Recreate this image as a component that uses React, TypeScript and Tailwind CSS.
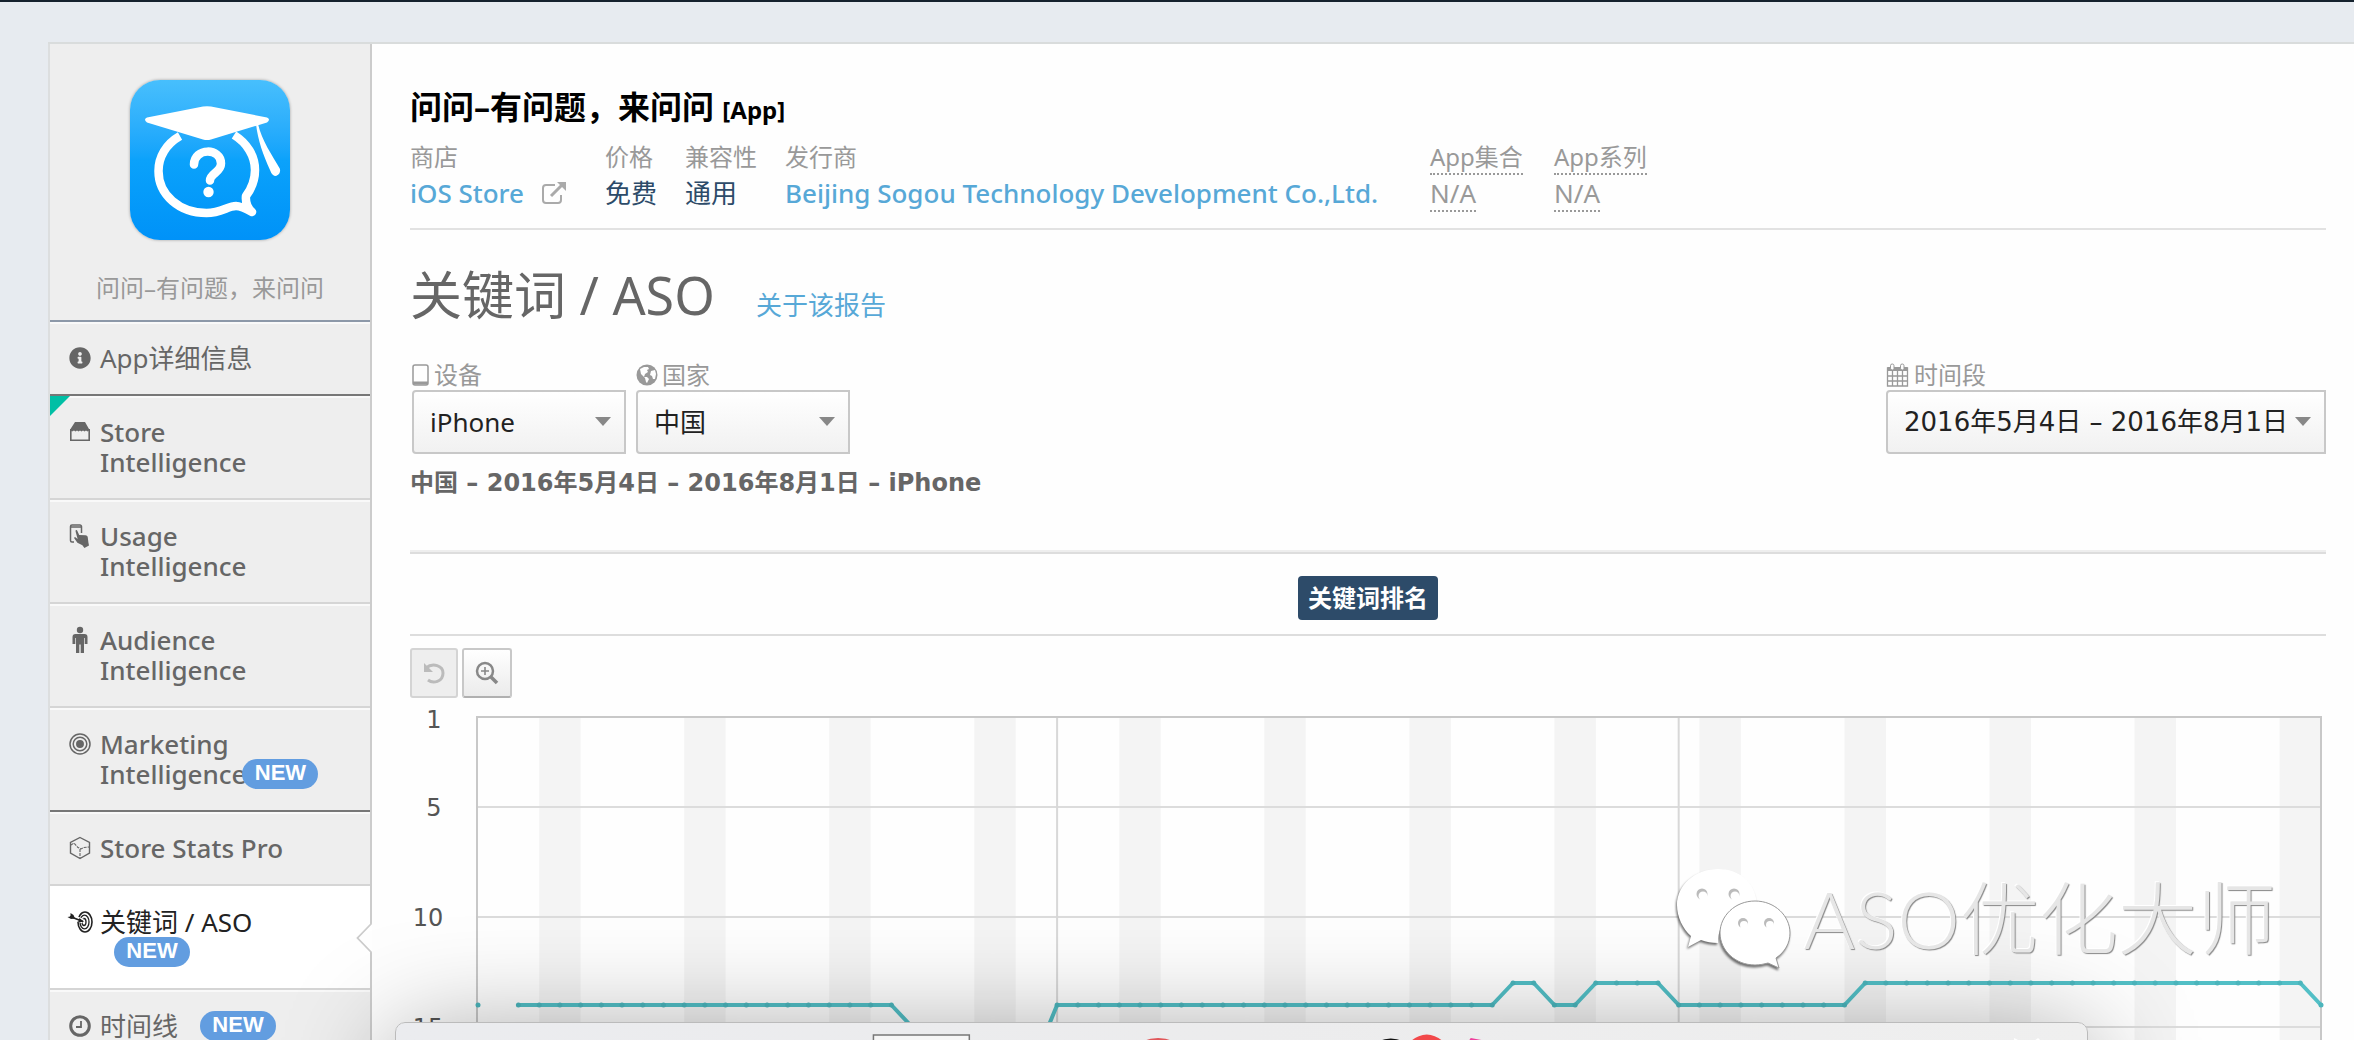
import type { ReactNode } from "react";
import { FaInfoCircle } from "react-icons/fa";

const DAYS = 89;
const PLOT_WIDTH = 1844;
const STEP = PLOT_WIDTH / DAYS;

const rankY = (rank: number) => 219 + (rank - 10) * 22;
const dayX = (day: number) => Math.round(day * STEP * 10) / 10;

// rank changes only; days in between are straight
const ranks: [number, number][] = [
  [2, 14],
  [20, 14],
  [21, 15],
  [24, 17],
  [27, 16.3],
  [28, 14],
  [49, 14],
  [50, 13],
  [51, 13],
  [52, 14],
  [53, 14],
  [54, 13],
  [57, 13],
  [58, 14],
  [66, 14],
  [67, 13],
  [88, 13],
  [89, 14],
];

const weekends = Array.from({ length: 13 }, (_, i) => 3 + i * 7);
const months = [28, 58];

function rankOn(day: number) {
  const i = ranks.findIndex(([d]) => d >= day);
  const [d1, r1] = ranks[i];
  if (d1 === day) return r1;
  const [d0, r0] = ranks[i - 1];
  return r0 + ((r1 - r0) * (day - d0)) / (d1 - d0);
}

function StoreIcon() {
  return (
    <svg viewBox="0 0 22 22" className="size-[22px]" fill="currentColor">
      <path d="M6 1h10l4 7v1.500l-1.500 1-1.500-1-1.500 1-1.500-1-1.500 1-1.500-1-1.500 1-1.500-1-1.500 1-1.500-1L3 10.500l-1.500-1V8z" />
      <path d="M1.800 8v11.200h18.400V8" fill="none" stroke="currentColor" strokeWidth="1.600" />
    </svg>
  );
}

function TouchIcon() {
  return (
    <svg viewBox="0 0 22 26" className="h-[26px] w-[22px]" fill="currentColor">
      <path
        d="M5 19H3a1.500 1.500 0 0 1-1.500-1.500v-14A1.500 1.500 0 0 1 3 2h8a1.500 1.500 0 0 1 1.500 1.500V10M1.500 4H12"
        fill="none"
        stroke="currentColor"
        strokeWidth="1.500"
      />
      <path d="M6.600 7.500c.6-.8 1.500-.4 1.800.4l1.800 4.200 6.200.2c1.600.1 2.200 1 2.400 2.200l.6 5 .6 3-4.600 2.500-2-2.800-5-2.400-3.200-4.600c-.3-.9.8-1.400 1.600-.7l1.800 1.500-2-7.500z" />
    </svg>
  );
}

function PersonIcon() {
  return (
    <svg viewBox="0 0 22 28" className="h-[28px] w-[22px]" fill="currentColor">
      <circle cx="11" cy="4" r="3.200" />
      <path d="M6.500 8h9q3 0 3 3v7h-2.800v-6h-.7v15h-3.300v-8.500h-1.400V27H7V12h-.7v6H3.500v-7q0-3 3-3z" />
    </svg>
  );
}

function TargetIcon() {
  return (
    <svg viewBox="0 0 22 22" className="size-[22px]" fill="none" stroke="currentColor" strokeWidth="1.500">
      <circle cx="11" cy="11" r="10" />
      <circle cx="11" cy="11" r="6.800" />
      <circle cx="11" cy="11" r="3.200" fill="currentColor" />
    </svg>
  );
}

function CubeIcon() {
  return (
    <svg viewBox="0 0 22 24" className="h-[24px] w-[22px]" fill="none" stroke="currentColor">
      <path d="M11 1.500 20.500 6.500v10.500L11 22.500 1.500 17V6.500z" strokeWidth="1.400" />
      <path d="m2 9 3-2 4 4.500 3 1.500 3-1.500 5-.5M11 13v9" strokeWidth="1.100" strokeDasharray="3 1" />
    </svg>
  );
}

function DartIcon() {
  return (
    <svg viewBox="0 0 26 24" className="h-[24px] w-[26px] shrink-0" fill="none" stroke="currentColor">
      <ellipse cx="18" cy="12" rx="7" ry="10" strokeWidth="1.600" />
      <ellipse cx="17.500" cy="12" rx="4.500" ry="6.800" strokeWidth="1.300" />
      <ellipse cx="17" cy="12" rx="2" ry="3.500" strokeWidth="1.300" />
      <path d="m4 7 12 4" stroke="#fff" strokeWidth="5" />
      <path d="m3 6.500 13 5" strokeWidth="1.700" />
      <path d="m3.500 3 3 2L8 8.500 4 9 .500 7l3-.5z" fill="currentColor" stroke="none" />
      <path d="m12.500 8 4.500 3.800-6 .4z" fill="currentColor" stroke="none" />
    </svg>
  );
}

function ClockIcon() {
  return (
    <svg viewBox="0 0 22 22" className="size-[22px]" fill="none" stroke="currentColor">
      <circle cx="11" cy="11" r="9.300" strokeWidth="3" />
      <path d="M12 6v6H7" strokeWidth="1.800" />
    </svg>
  );
}

function AppLogo() {
  return (
    <svg
      viewBox="0 0 160 160"
      className="size-40 rounded-[30px] bg-linear-to-b from-[#47bffd] via-[#0ba2fb] to-[#0092f8] shadow-[0_0_3px_rgba(0,0,0,0.35)]"
      role="img"
      aria-label="问问"
    >
      <path
        d="M50 56C36 64 28.500 77 28.500 91c0 24 21 42 48 42C91 133 98 126 106 126q5 0 16 6-7-6-6-16C122 108 125 100 125 90 125 76 117 63 104 55"
        fill="none"
        stroke="#fff"
        strokeWidth="8.500"
        strokeLinejoin="round"
      />
      <path d="M17 37.500 73 26.500q4-.6 8 0l56 11q4 2 0 5L81 59.500q-4 1-8 0L17 42.500q-4-3 0-5z" fill="#fff" />
      <path d="M126 44c2 17 7 30 14 46q2 6 6 6 5-2 4-7c-8-14-18-28-22-45z" fill="#fff" />
      <path
        d="M64 84.500c0-17 27-17 27-1 0 9-11 10-11 17"
        fill="none"
        stroke="#fff"
        strokeWidth="8.500"
        strokeLinecap="round"
      />
      <circle cx="78.500" cy="112" r="5.200" fill="#fff" />
    </svg>
  );
}

function NewBadge({ className }: { className: string }) {
  return (
    <span
      className={`inline-block h-[30px] w-[76px] rounded-full bg-[#629de0] text-center align-top font-['Liberation_Sans',sans-serif] text-[22px] leading-[28px] font-bold text-white ${className}`}
    >
      NEW
    </span>
  );
}

type NavItem = {
  label: string;
  icon: ReactNode;
  badge?: string;
  tall?: boolean;
  latin?: boolean;
  dark?: boolean;
  corner?: boolean;
  active?: boolean;
};

const nav: NavItem[] = [
  { label: "App详细信息", icon: <FaInfoCircle className="size-[22px]" />, dark: true },
  { label: "Store Intelligence", icon: <StoreIcon />, tall: true, latin: true, corner: true },
  { label: "Usage Intelligence", icon: <TouchIcon />, tall: true, latin: true },
  { label: "Audience Intelligence", icon: <PersonIcon />, tall: true, latin: true },
  { label: "Marketing Intelligence", icon: <TargetIcon />, tall: true, latin: true, dark: true, badge: "-ml-1" },
  { label: "Store Stats Pro", icon: <CubeIcon />, latin: true },
  { label: "关键词 / ASO", icon: <DartIcon />, active: true, badge: "ml-[14px]" },
  { label: "时间线", icon: <ClockIcon />, badge: "ml-[22px]" },
];

function Sidebar() {
  return (
    <aside className="flex w-[324px] shrink-0 flex-col border-x-2 border-l-[#dcdedf] border-r-[#ccc] bg-[#eee]">
      <div className="flex flex-col items-center border-b-2 border-[#8c98a8] pt-9 pb-[17px]">
        <AppLogo />
        <p className="mt-[33px] text-[24px] leading-[30px] text-[#999]">问问–有问题，来问问</p>
      </div>
      <nav>
        <ul>
          {nav.map((item) => (
            <li
              key={item.label}
              className={`relative border-b-2 ${item.dark ? "border-b-[#777]" : "border-b-[#d5d5d5]"} ${
                item.active ? "bg-white text-[#222]" : "text-[#666]"
              }`}
            >
              <a
                href="#"
                className={`flex gap-[9px] border-t-2 pt-[19px] pb-[21px] pl-[19px] ${
                  item.active ? "border-white" : "border-[#f9f9f9]"
                }`}
              >
                <span className="flex h-[30px] w-[22px] shrink-0 items-center justify-center">{item.icon}</span>
                <span className={`text-[26px] leading-[30px] ${item.latin ? "font-medium" : "font-normal"}`}>
                  {item.tall ? (
                    <>
                      {item.label.split(" ")[0]}
                      <br />
                      {item.label.split(" ")[1]}
                    </>
                  ) : (
                    item.label
                  )}
                  {item.active && <br />}
                  {item.badge && <NewBadge className={item.badge} />}
                </span>
              </a>
              {item.corner && (
                <svg viewBox="0 0 20 20" className="absolute top-0 left-0 size-5">
                  <path d="M0 0h20L0 20z" fill="#00bfa5" />
                </svg>
              )}
              {item.active && (
                <svg viewBox="0 0 16 32" className="absolute top-9 -right-0.5 h-8 w-4">
                  <path d="M16 1 2 16l14 15" fill="#fff" />
                  <path d="M15 0v2L1.500 16 15 30v2" fill="none" stroke="#ccc" strokeWidth="1.800" />
                </svg>
              )}
            </li>
          ))}
        </ul>
      </nav>
    </aside>
  );
}

function Caret({ className }: { className: string }) {
  return (
    <svg viewBox="0 0 16 9" className={`pointer-events-none absolute top-[27px] h-[9px] w-4 ${className}`}>
      <path d="M0 0h16L8 9z" fill="#888" />
    </svg>
  );
}

function Filter({
  id,
  label,
  icon,
  value,
  width,
}: {
  id: string;
  label: string;
  icon: ReactNode;
  value: string;
  width: string;
}) {
  return (
    <div>
      <label htmlFor={id} className="flex items-center gap-1 text-[24px] leading-[30px] text-[#999]">
        {icon}
        {label}
      </label>
      <div className={`relative ${width}`}>
        <select
          id={id}
          className="block h-16 w-full appearance-none rounded-l border-2 border-[#c8c8c8] bg-linear-to-b from-white to-[#f1f1f1] px-4 text-[26px] text-[#222]"
        >
          <option>{value}</option>
        </select>
        <Caret className="right-[15px]" />
      </div>
    </div>
  );
}

function Meta({ label, className, children }: { label: ReactNode; className?: string; children: ReactNode }) {
  return (
    <div className={className}>
      <dt className="text-[24px] leading-[38px] text-[#999]">{label}</dt>
      <dd className="flex items-center text-[26px] leading-[34px]">{children}</dd>
    </div>
  );
}

function Dotted({ children }: { children: ReactNode }) {
  return <span className="border-b-2 border-dotted border-[#999] text-[#999]">{children}</span>;
}

function RankChart() {
  const dots = Array.from({ length: DAYS - 1 }, (_, i) => i + 2);
  return (
    <div className="flex pr-[5px]">
      <svg
        className="h-[460px] w-[67px] shrink-0 font-['DejaVu_Sans',sans-serif] text-[24px]"
        fill="#555"
        textAnchor="middle"
      >
        <text x="24" y="30">1</text>
        <text x="24" y="118">5</text>
        <text x="18" y="228">10</text>
        <text x="18" y="338">15</text>
      </svg>
      <svg
        viewBox={`0 0 ${PLOT_WIDTH} 460`}
        preserveAspectRatio="none"
        className="h-[460px] min-w-0 flex-1 overflow-visible"
        fill="none"
      >
        {weekends.map((d) => (
          <rect key={d} x={dayX(d)} y="19" width={STEP * 2} height="441" fill="#f4f4f4" />
        ))}
        {[5, 10, 15].map((r) => (
          <path key={r} d={`M0 ${rankY(r)}H${PLOT_WIDTH}`} stroke="#dcdcdc" strokeWidth="2" />
        ))}
        {months.map((d) => (
          <path key={d} d={`M${dayX(d)} 19V460`} stroke="#d8d8d8" strokeWidth="2" />
        ))}
        <path d={`M0 460V19H${PLOT_WIDTH}V460`} stroke="#c8c8c8" strokeWidth="2" />
        <polyline
          points={ranks.map(([d, r]) => `${dayX(d)},${rankY(r)}`).join(" ")}
          stroke="#52bfc6"
          strokeWidth="4"
          strokeLinejoin="round"
        />
        <circle cx="1" cy={rankY(14)} r="2.500" fill="#4bb5bc" />
        {dots.map((d) => (
          <circle key={d} cx={dayX(d)} cy={rankY(rankOn(d))} r="2.500" fill="#4bb5bc" />
        ))}
      </svg>
    </div>
  );
}

function Watermark() {
  return (
    <div className="pointer-events-none fixed right-[78px] bottom-[69px] flex items-center gap-[10px]">
      <svg viewBox="0 0 118 104" className="h-[104px] w-[118px] drop-shadow-[-1px_2px_1px_rgba(0,0,0,0.55)]">
        <path
          d="M43 2C20 2 2 18 2 38c0 12 6 24 14 31l-3 11 13-7c5 2 11 3 17 3 0-22 16-38 39-40C80 15 64 2 43 2z"
          fill="#fff"
        />
        <path
          d="M80 34c-20 0-35 15-35 32s15 32 35 32c5 0 9-1 13-2l11 5-3-10c9-6 14-15 14-25 0-17-15-32-35-32z"
          fill="#fff"
          stroke="#999"
          strokeWidth="1"
        />
        <g fill="#bbb">
          <circle cx="27" cy="27" r="5.500" />
          <circle cx="59" cy="27" r="5.500" />
          <circle cx="68" cy="56" r="5" />
          <circle cx="94" cy="56" r="5" />
        </g>
        <g fill="#fff">
          <circle cx="28" cy="29" r="4.500" />
          <circle cx="60" cy="29" r="4.500" />
          <circle cx="69" cy="58" r="4" />
          <circle cx="95" cy="58" r="4" />
        </g>
      </svg>
      <span className="font-[Lato,'Noto_Sans_CJK_SC',sans-serif] text-[79px] leading-[96px] font-light text-[#e6e6e6] [text-shadow:1px_1px_1px_#888,-1px_-1px_0_#fff]">
        ASO优化大师
      </span>
    </div>
  );
}

function Dock() {
  return (
    <div className="fixed right-[266px] -bottom-[140px] left-[395px] h-[158px] rounded-t-[10px] border border-[#bbb] bg-linear-to-r from-[#ebecef] via-[#ececed] to-[#efefef] shadow-[0_14px_110px_rgba(0,0,0,0.38)]">
      <svg viewBox="0 0 1693 18" preserveAspectRatio="none" className="h-[18px] w-full">
        <path d="M478 18V12h96v6" fill="#f6f6f6" stroke="#777" strokeWidth="1.500" />
        <path d="M748 18q15-6 30 0z" fill="#e0575a" />
        <path d="M984 18q12-5 24 0z" fill="#111" />
        <path d="M1016 18q16-13 32 0z" fill="#f2484a" />
        <path d="m1076 15 16 3h-18z" fill="#ee3f9b" />
        <path d="M1620 18v-3l6 3zM1640 18l4-3 3 3z" fill="#fff" />
      </svg>
    </div>
  );
}

export default function App() {
  return (
    <div className="flex h-screen flex-col overflow-hidden border-t-2 border-[#15222e] bg-[#e7ebf0] pt-10 pl-12 font-['Noto_Sans','Noto_Sans_CJK_SC',sans-serif]">
      <div className="flex flex-1 border-t-2 border-[#d9dcdc]">
        <Sidebar />
        <main className="min-w-0 flex-1 bg-[#fefefe] pt-[43px] pr-7 pl-[38px]">
          <h1 className="text-[32px] leading-10 font-bold text-black">
            问问–有问题，来问问 <span className="text-[24px]">[App]</span>
          </h1>
          <dl className="mt-2 flex gap-7 border-b-2 border-[#e2e2e2] pb-4">
            <Meta label="商店" className="w-[167px]">
              <a href="#" className="font-medium text-[#57a8d7]">iOS Store</a>
              <svg viewBox="0 0 26 24" className="mr-[10px] ml-auto h-6 w-[26px]" fill="none" stroke="#aaa">
                <path d="M14 4H5a3 3 0 0 0-3 3v12a3 3 0 0 0 3 3h12a3 3 0 0 0 3-3v-5" strokeWidth="2" />
                <path d="M10 15 21 4" strokeWidth="3" />
                <path d="M16 1h9v9z" fill="#aaa" stroke="none" />
              </svg>
            </Meta>
            <Meta label="价格">
              <span className="text-[#2d4b69]">免费</span>
            </Meta>
            <Meta label="兼容性">
              <span className="text-[#2d4b69]">通用</span>
            </Meta>
            <Meta label="发行商" className="w-[617px]">
              <a href="#" className="font-medium whitespace-nowrap text-[#57a8d7]">
                Beijing Sogou Technology Development Co.,Ltd.
              </a>
            </Meta>
            <Meta label={<Dotted>App集合</Dotted>} className="w-24">
              <Dotted>N/A</Dotted>
            </Meta>
            <Meta label={<Dotted>App系列</Dotted>}>
              <Dotted>N/A</Dotted>
            </Meta>
          </dl>

          <div className="mt-[35px] flex items-baseline gap-7">
            <h2 className="min-w-[318px] text-[52px] leading-[60px] text-[#666]">关键词 / ASO</h2>
            <a href="#" className="text-[26px] text-[#57a8d7]">关于该报告</a>
          </div>

          <div className="mt-[35px] flex items-start gap-[10px] pl-0.5">
            <Filter
              id="device"
              label="设备"
              value="iPhone"
              width="w-[214px]"
              icon={
                <svg viewBox="0 0 18 22" className="h-[22px] w-[18px]" fill="none" stroke="#999">
                  <rect x="1" y="1" width="15" height="20" rx="2" strokeWidth="1.500" />
                  <path d="M1 19h15" strokeWidth="3" />
                </svg>
              }
            />
            <Filter
              id="country"
              label="国家"
              value="中国"
              width="w-[214px]"
              icon={
                <svg viewBox="0 0 22 22" className="size-[22px]">
                  <circle cx="11" cy="11" r="10.500" fill="#999" />
                  <path
                    d="m4 5 4-2 4 0 1 2-2 1 1 2-3 2-1 3 3 0 2 2-2 4-1-1-1-4-4-4zM15 7l4-1 1 4-1 5-2 0-1-3-2-1z"
                    fill="#fefefe"
                  />
                </svg>
              }
            />
            <div className="ml-auto">
              <Filter
                id="period"
                label="时间段"
                value="2016年5月4日 – 2016年8月1日"
                width="w-[440px] font-['DejaVu_Sans','Noto_Sans_CJK_SC',sans-serif]"
                icon={
                  <svg viewBox="0 0 24 24" className="size-6" fill="none" stroke="#999">
                    <path d="M1.500 5h20v18h-20zM6.500 8v15M11.500 8v15M16.500 8v15M1.500 13h20M1.500 18h20" strokeWidth="1.300" />
                    <path d="M1.500 6h20" strokeWidth="4" />
                    <rect x="4.500" y="1" width="3.500" height="6" rx="1.700" fill="#fefefe" />
                    <rect x="14.500" y="1" width="3.500" height="6" rx="1.700" fill="#fefefe" />
                  </svg>
                }
              />
            </div>
          </div>
          <p className="mt-[14px] font-['DejaVu_Sans','Noto_Sans_CJK_SC',sans-serif] text-[24px] leading-[30px] font-bold text-[#666]">
            中国 – 2016年5月4日 – 2016年8月1日 – iPhone
          </p>

          <div className="mt-[52px] flex justify-center border-t-2 border-b-2 border-t-[#eee] border-b-[#ddd] pb-[14px]">
            <div className="flex w-full justify-center border-t-2 border-[#ddd] pt-[22px]">
              <button
                type="button"
                className="h-11 w-[140px] rounded bg-[#2d4b69] text-[24px] leading-[30px] font-bold text-white"
              >
                关键词排名
              </button>
            </div>
          </div>

          <div className="mt-3 flex gap-1">
            <button
              type="button"
              disabled
              aria-label="重置"
              className="flex h-[50px] w-12 items-center justify-center rounded-[3px] border-2 border-[#d4d4d4] bg-[#eee]"
            >
              <svg viewBox="0 0 22 22" className="size-[22px]" fill="none" stroke="#bbb">
                <path d="M3 6c7-6 17-2 17 5 0 9-10 11-15 7" strokeWidth="3" />
                <path d="M1 1v9h9z" fill="#bbb" stroke="none" />
              </svg>
            </button>
            <button
              type="button"
              aria-label="放大"
              className="flex h-[50px] w-[50px] items-center justify-center rounded-[3px] border-2 border-[#c8c8c8] border-b-[#b0b0b0] bg-linear-to-b from-white to-[#ebebeb]"
            >
              <svg viewBox="0 0 24 24" className="size-6" fill="none" stroke="#888">
                <circle cx="10" cy="10" r="8" strokeWidth="2.500" />
                <path d="m16 16 6 6" strokeWidth="3.500" />
                <path d="M10 6v8M6 10h8" strokeWidth="1.600" />
              </svg>
            </button>
          </div>

          <RankChart />
        </main>
      </div>
      <Dock />
      <Watermark />
    </div>
  );
}
